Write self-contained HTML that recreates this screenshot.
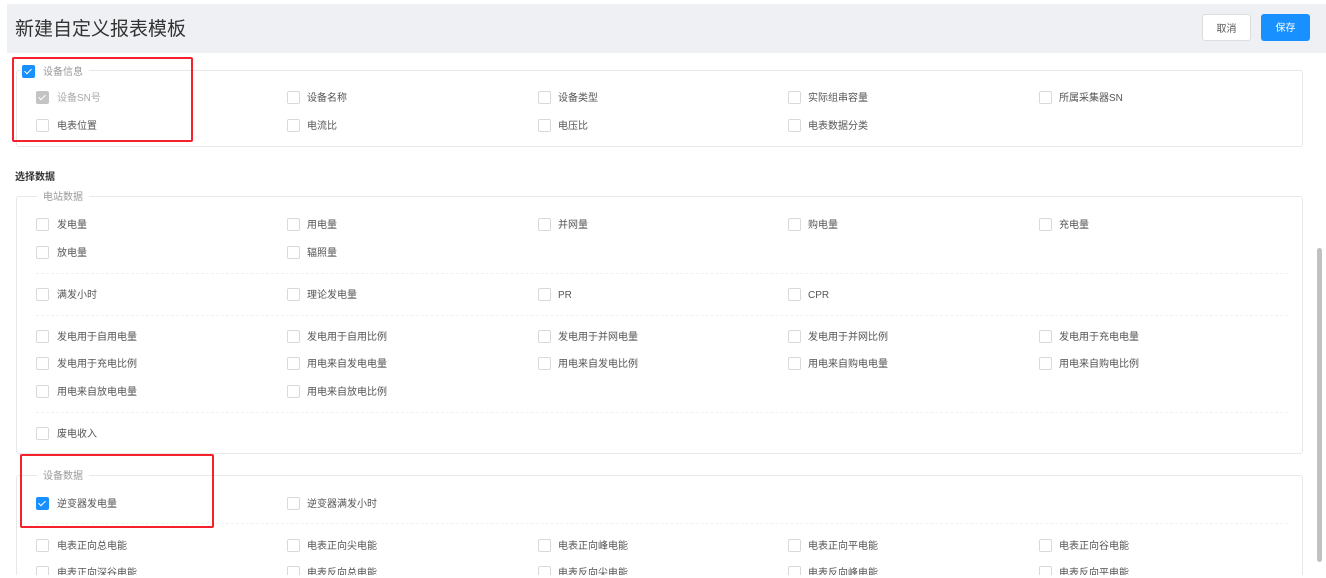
<!DOCTYPE html>
<html><head><meta charset="utf-8"><style>
*{box-sizing:border-box;margin:0;padding:0}
html,body{width:1326px;height:578px;overflow:hidden}
body{background:#fff;font-family:"Liberation Sans","Noto Sans CJK SC",sans-serif;color:#555;position:relative}
.a{position:absolute}
.hdr{left:7px;top:4px;width:1319px;height:49px;background:#eff0f4}
.title{left:15px;top:18px;font-size:19px;color:#333;line-height:24px}
.btn{top:14px;width:49px;height:27px;border-radius:3px;font-size:10px;text-align:center;line-height:29px}
.fs{border:1px solid #e8e8e8;border-radius:3px;left:16px;width:1287px}
.lg{font-size:10px;color:#999;background:#fff;padding:0 6px;line-height:14px;margin-top:2px}
.cb{width:13px;height:13px;border:1px solid #d9d9d9;border-radius:2px;background:#fff}
.cb.on{background:#1890ff;border-color:#1890ff}
.cb.dis{background:#c4c4c4;border-color:#c4c4c4}
.cb.on::after,.cb.dis::after{content:"";position:absolute;left:3px;top:1px;width:3px;height:6px;border:solid #fff;border-width:0 1.5px 1.5px 0;transform:rotate(45deg)}
.t{font-size:10px;color:#555;line-height:14px;white-space:nowrap;margin-top:2px}
.sep{left:36px;width:1252px;border-top:1px dashed #f0f0f0;height:0}
.red{border:2px solid #f5222d;border-radius:2px}
</style></head><body>
<div class="a hdr"></div>
<div class="a title">新建自定义报表模板</div>
<div class="a btn" style="left:1202px;background:#fff;border:1px solid #ddd;color:#555">取消</div>
<div class="a btn" style="left:1261px;background:#1890ff;color:#fff">保存</div>

<div class="a fs" style="top:70px;height:77px"></div>
<div class="a lg" style="left:37px;top:64px">设备信息</div>
<div class="a cb on" style="left:22px;top:65px"></div>

<div class="a cb dis" style="left:36px;top:91px"></div><div class="a t" style="left:57px;top:90px;color:#aaa">设备SN号</div>
<div class="a cb" style="left:287px;top:91px"></div><div class="a t" style="left:307px;top:90px">设备名称</div>
<div class="a cb" style="left:538px;top:91px"></div><div class="a t" style="left:558px;top:90px">设备类型</div>
<div class="a cb" style="left:788px;top:91px"></div><div class="a t" style="left:808px;top:90px">实际组串容量</div>
<div class="a cb" style="left:1039px;top:91px"></div><div class="a t" style="left:1059px;top:90px">所属采集器SN</div>
<div class="a cb" style="left:36px;top:119px"></div><div class="a t" style="left:57px;top:118px">电表位置</div>
<div class="a cb" style="left:287px;top:119px"></div><div class="a t" style="left:307px;top:118px">电流比</div>
<div class="a cb" style="left:538px;top:119px"></div><div class="a t" style="left:558px;top:118px">电压比</div>
<div class="a cb" style="left:788px;top:119px"></div><div class="a t" style="left:808px;top:118px">电表数据分类</div>

<div class="a t" style="left:15px;top:168px;font-weight:bold;color:#333;margin-top:3px">选择数据</div>

<div class="a fs" style="top:196px;height:258px"></div>
<div class="a lg" style="left:37px;top:189px">电站数据</div>
<div class="a cb" style="left:36px;top:218px"></div><div class="a t" style="left:57px;top:217px">发电量</div>
<div class="a cb" style="left:287px;top:218px"></div><div class="a t" style="left:307px;top:217px">用电量</div>
<div class="a cb" style="left:538px;top:218px"></div><div class="a t" style="left:558px;top:217px">并网量</div>
<div class="a cb" style="left:788px;top:218px"></div><div class="a t" style="left:808px;top:217px">购电量</div>
<div class="a cb" style="left:1039px;top:218px"></div><div class="a t" style="left:1059px;top:217px">充电量</div>
<div class="a cb" style="left:36px;top:246px"></div><div class="a t" style="left:57px;top:245px">放电量</div>
<div class="a cb" style="left:287px;top:246px"></div><div class="a t" style="left:307px;top:245px">辐照量</div>
<div class="a sep" style="top:273px"></div>
<div class="a cb" style="left:36px;top:288px"></div><div class="a t" style="left:57px;top:287px">满发小时</div>
<div class="a cb" style="left:287px;top:288px"></div><div class="a t" style="left:307px;top:287px">理论发电量</div>
<div class="a cb" style="left:538px;top:288px"></div><div class="a t" style="left:558px;top:287px">PR</div>
<div class="a cb" style="left:788px;top:288px"></div><div class="a t" style="left:808px;top:287px">CPR</div>
<div class="a sep" style="top:315px"></div>
<div class="a cb" style="left:36px;top:330px"></div><div class="a t" style="left:57px;top:329px">发电用于自用电量</div>
<div class="a cb" style="left:287px;top:330px"></div><div class="a t" style="left:307px;top:329px">发电用于自用比例</div>
<div class="a cb" style="left:538px;top:330px"></div><div class="a t" style="left:558px;top:329px">发电用于并网电量</div>
<div class="a cb" style="left:788px;top:330px"></div><div class="a t" style="left:808px;top:329px">发电用于并网比例</div>
<div class="a cb" style="left:1039px;top:330px"></div><div class="a t" style="left:1059px;top:329px">发电用于充电电量</div>
<div class="a cb" style="left:36px;top:357px"></div><div class="a t" style="left:57px;top:356px">发电用于充电比例</div>
<div class="a cb" style="left:287px;top:357px"></div><div class="a t" style="left:307px;top:356px">用电来自发电电量</div>
<div class="a cb" style="left:538px;top:357px"></div><div class="a t" style="left:558px;top:356px">用电来自发电比例</div>
<div class="a cb" style="left:788px;top:357px"></div><div class="a t" style="left:808px;top:356px">用电来自购电电量</div>
<div class="a cb" style="left:1039px;top:357px"></div><div class="a t" style="left:1059px;top:356px">用电来自购电比例</div>
<div class="a cb" style="left:36px;top:385px"></div><div class="a t" style="left:57px;top:384px">用电来自放电电量</div>
<div class="a cb" style="left:287px;top:385px"></div><div class="a t" style="left:307px;top:384px">用电来自放电比例</div>
<div class="a sep" style="top:412px"></div>
<div class="a cb" style="left:36px;top:427px"></div><div class="a t" style="left:57px;top:426px">废电收入</div>

<div class="a fs" style="top:475px;height:120px"></div>
<div class="a lg" style="left:37px;top:468px">设备数据</div>
<div class="a cb on" style="left:36px;top:497px"></div><div class="a t" style="left:57px;top:496px">逆变器发电量</div>
<div class="a cb" style="left:287px;top:497px"></div><div class="a t" style="left:307px;top:496px">逆变器满发小时</div>
<div class="a sep" style="top:523px"></div>
<div class="a cb" style="left:36px;top:539px"></div><div class="a t" style="left:57px;top:538px">电表正向总电能</div>
<div class="a cb" style="left:287px;top:539px"></div><div class="a t" style="left:307px;top:538px">电表正向尖电能</div>
<div class="a cb" style="left:538px;top:539px"></div><div class="a t" style="left:558px;top:538px">电表正向峰电能</div>
<div class="a cb" style="left:788px;top:539px"></div><div class="a t" style="left:808px;top:538px">电表正向平电能</div>
<div class="a cb" style="left:1039px;top:539px"></div><div class="a t" style="left:1059px;top:538px">电表正向谷电能</div>
<div class="a cb" style="left:36px;top:566px"></div><div class="a t" style="left:57px;top:565px">电表正向深谷电能</div>
<div class="a cb" style="left:287px;top:566px"></div><div class="a t" style="left:307px;top:565px">电表反向总电能</div>
<div class="a cb" style="left:538px;top:566px"></div><div class="a t" style="left:558px;top:565px">电表反向尖电能</div>
<div class="a cb" style="left:788px;top:566px"></div><div class="a t" style="left:808px;top:565px">电表反向峰电能</div>
<div class="a cb" style="left:1039px;top:566px"></div><div class="a t" style="left:1059px;top:565px">电表反向平电能</div>
<div class="a" style="left:0;top:575px;width:1326px;height:30px;background:#fff"></div>

<div class="a" style="left:1317px;top:248px;width:5px;height:314px;background:#c1c1c1;border-radius:3px"></div>

<div class="a red" style="left:12px;top:57px;width:181px;height:85px"></div>
<div class="a red" style="left:20px;top:454px;width:194px;height:74px"></div>
</body></html>
